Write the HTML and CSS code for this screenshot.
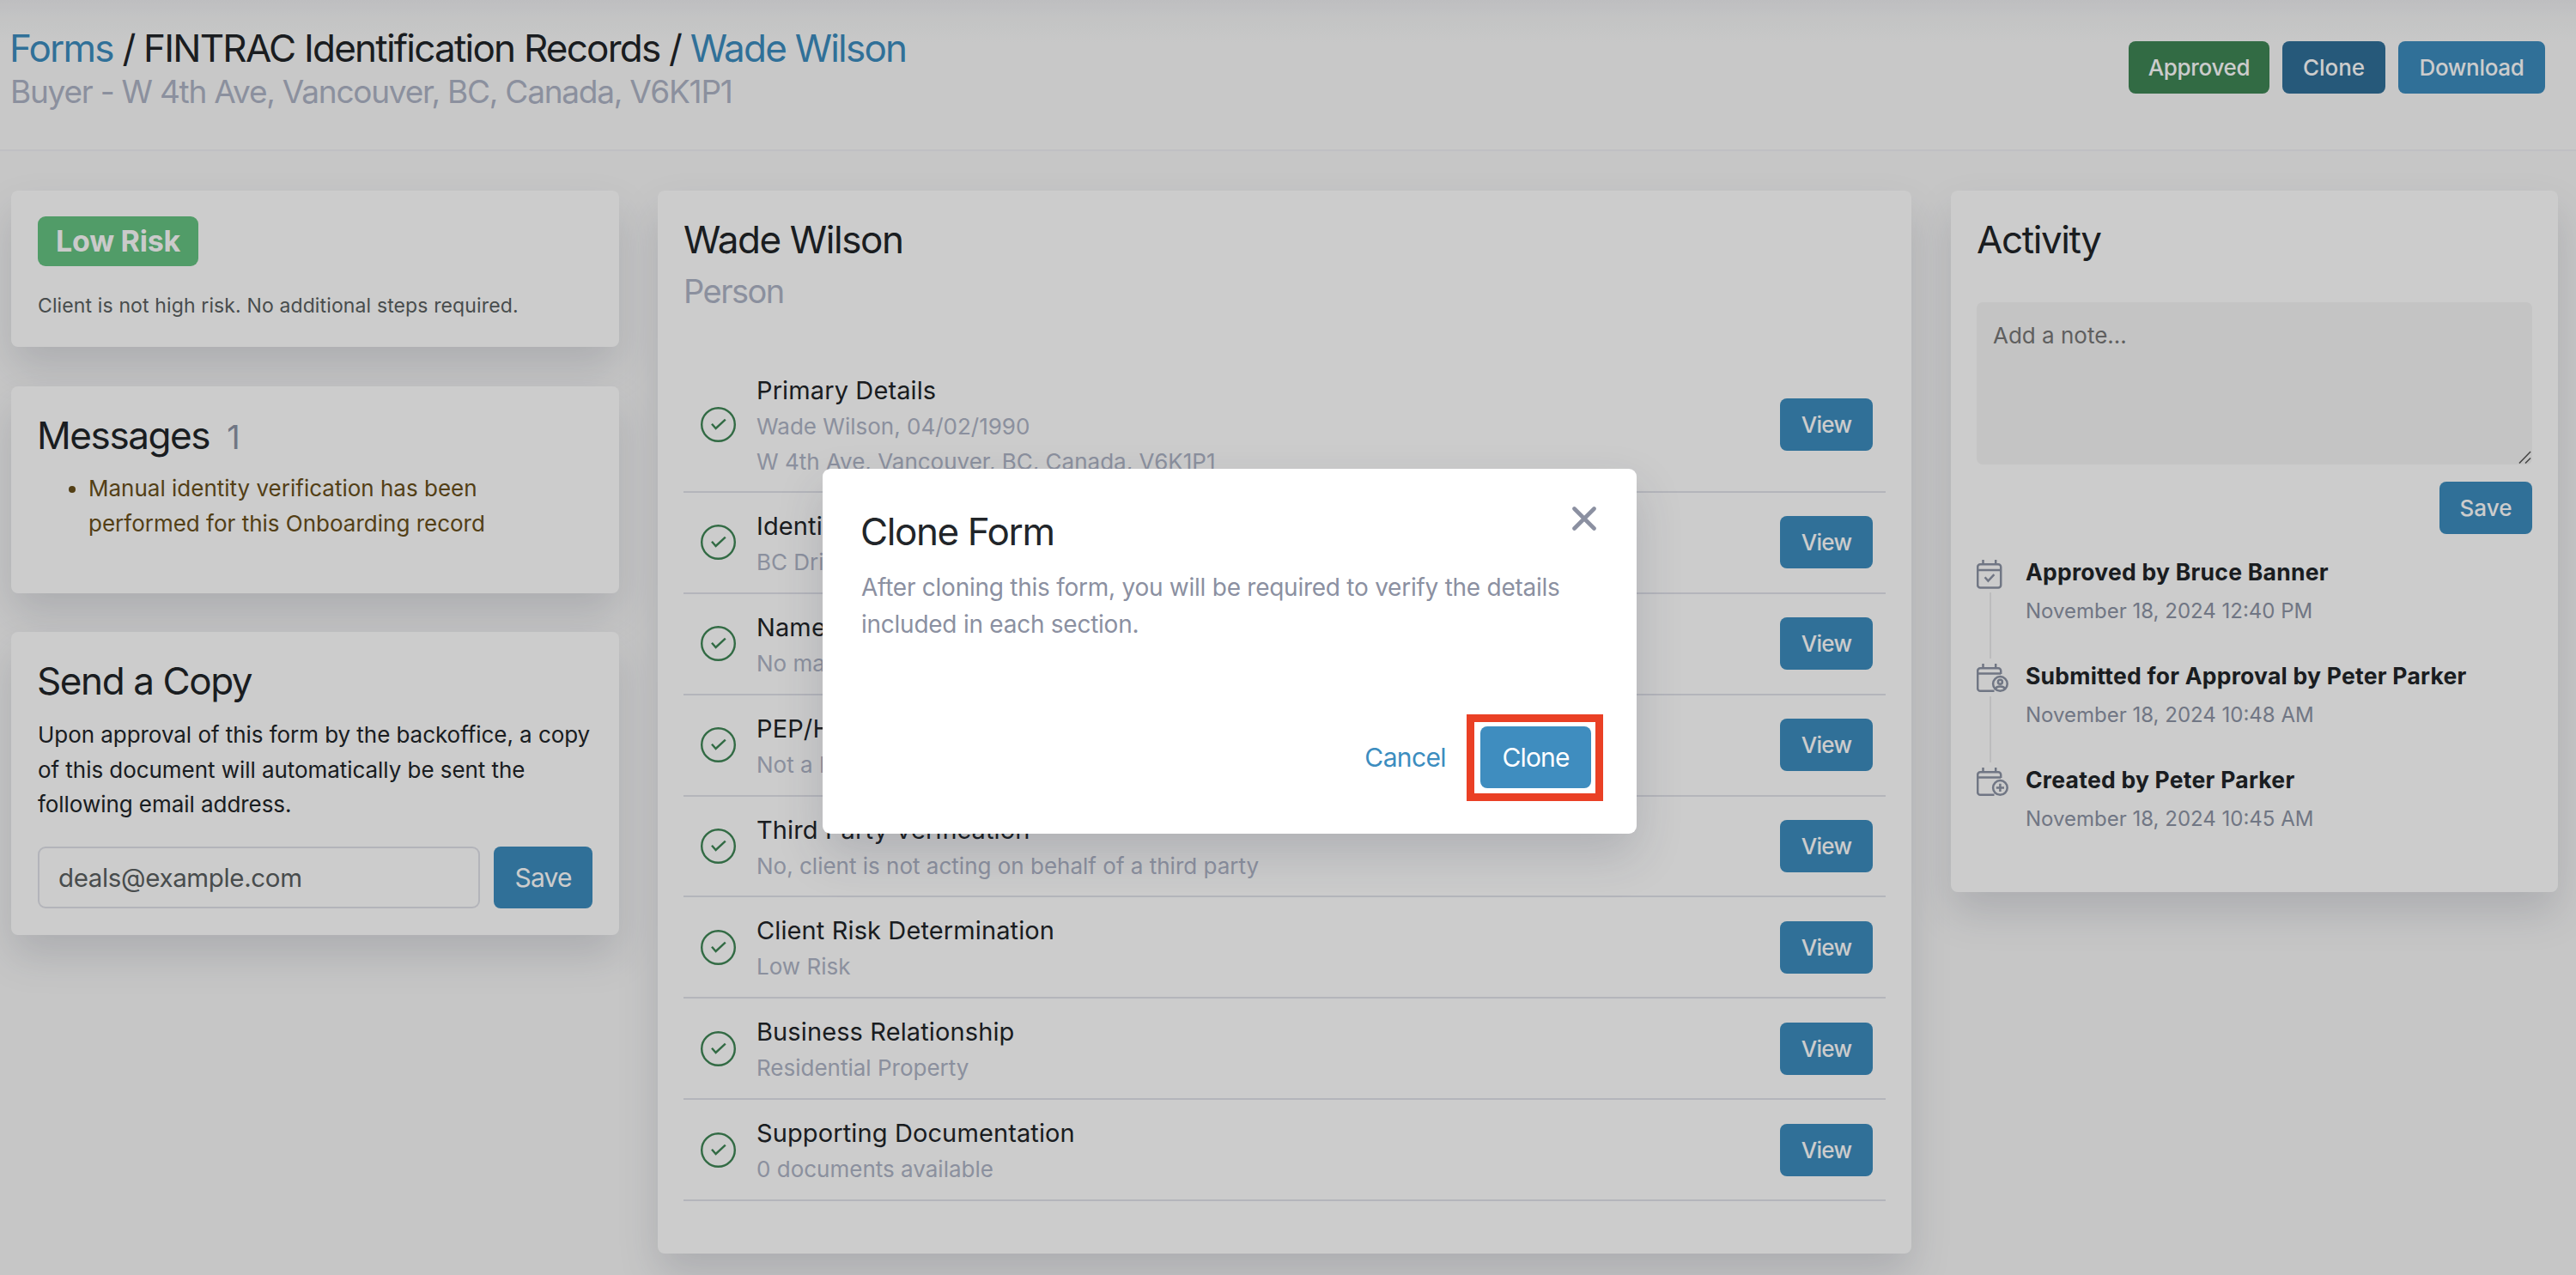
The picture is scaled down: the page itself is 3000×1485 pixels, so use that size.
FILE: index.html
```html
<!DOCTYPE html>
<html lang="en">
<head>
<meta charset="utf-8">
<title>FINTRAC Identification Records</title>
<link rel="stylesheet" href="styles.css">
</head>
<body>
<svg class="sprite" aria-hidden="true">
  <symbol id="check-circle" viewBox="0 0 41 41">
    <circle cx="20.5" cy="20.5" r="19.3"/>
    <path d="M13 19.800l4.600 5.200 11.200-10.400"/>
  </symbol>
  <symbol id="cal-check" viewBox="0 0 38 34">
    <rect x="1.2" y="5.2" width="27" height="27.4" rx="3"/>
    <path d="M1.2 12h27M7.5 0v5M22.2 0v5M9.6 20.2l3.8 4.4 7-7.4"/>
  </symbol>
  <symbol id="cal-user" viewBox="0 0 38 34">
    <path d="M28.2 12V8.2a3 3 0 0 0-3-3h-21a3 3 0 0 0-3 3v20.6a3 3 0 0 0 3 3H20.5M1.2 11.5h27M7.5 0v5M22.2 0v5"/>
    <circle cx="27.4" cy="23.4" r="8.3"/>
    <circle cx="27.4" cy="21.3" r="2.5"/>
    <path d="M22 29q1.2-2.6 5.4-2.6t5.4 2.6"/>
  </symbol>
  <symbol id="cal-plus" viewBox="0 0 38 34">
    <path d="M28.2 12V8.2a3 3 0 0 0-3-3h-21a3 3 0 0 0-3 3v20.6a3 3 0 0 0 3 3H20.5M1.2 11.5h27M7.5 0v5M22.2 0v5"/>
    <circle cx="27.4" cy="23.4" r="8.3"/>
    <path d="M27.4 18.8v9.2M22.8 23.4h9.2"/>
  </symbol>
</svg>

<header class="header">
  <div>
    <h1 class="crumbs"><a href="#">Forms</a> / FINTRAC Identification Records / <a href="#">Wade Wilson</a></h1>
    <p class="address">Buyer - W 4th Ave, Vancouver, BC, Canada, V6K1P1</p>
  </div>
  <div class="header-actions">
    <button class="btn btn-approved">Approved</button>
    <button class="btn btn-clone">Clone</button>
    <button class="btn btn-download">Download</button>
  </div>
</header>

<main class="columns">
  <div class="side">
    <section class="card risk">
      <span class="badge">Low Risk</span>
      <p class="risk-note">Client is not high risk. No additional steps required.</p>
    </section>
    <section class="card messages">
      <h2>Messages<span class="count">1</span></h2>
      <ul><li>Manual identity verification has been<br>performed for this Onboarding record</li></ul>
    </section>
    <section class="card send">
      <h2>Send a Copy</h2>
      <p class="send-text">Upon approval of this form by the backoffice, a copy<br>of this document will automatically be sent the<br>following email address.</p>
      <div class="email-row">
        <div class="email">deals@example.com</div>
        <button class="btn btn-large btn-email">Save</button>
      </div>
    </section>
  </div>

  <section class="card record">
    <h2>Wade Wilson</h2>
    <p class="kind">Person</p>
    <ul class="rows">
      <li class="row row-first"><svg class="check"><use href="#check-circle"/></svg><div class="row-text"><h3>Primary Details</h3><p>Wade Wilson, 04/02/1990<br>W 4th Ave, Vancouver, BC, Canada, V6K1P1</p></div><button class="btn btn-view">View</button></li>
      <li class="row"><svg class="check"><use href="#check-circle"/></svg><div class="row-text"><h3>Identi</h3><p>BC Dri</p></div><button class="btn btn-view">View</button></li>
      <li class="row"><svg class="check"><use href="#check-circle"/></svg><div class="row-text"><h3>Name</h3><p>No ma</p></div><button class="btn btn-view">View</button></li>
      <li class="row"><svg class="check"><use href="#check-circle"/></svg><div class="row-text"><h3>PEP/H</h3><p>Not a P</p></div><button class="btn btn-view">View</button></li>
      <li class="row"><svg class="check"><use href="#check-circle"/></svg><div class="row-text"><h3>Third Party Verification</h3><p>No, client is not acting on behalf of a third party</p></div><button class="btn btn-view">View</button></li>
      <li class="row"><svg class="check"><use href="#check-circle"/></svg><div class="row-text"><h3>Client Risk Determination</h3><p>Low Risk</p></div><button class="btn btn-view">View</button></li>
      <li class="row"><svg class="check"><use href="#check-circle"/></svg><div class="row-text"><h3>Business Relationship</h3><p>Residential Property</p></div><button class="btn btn-view">View</button></li>
      <li class="row"><svg class="check"><use href="#check-circle"/></svg><div class="row-text"><h3>Supporting Documentation</h3><p>0 documents available</p></div><button class="btn btn-view">View</button></li>
    </ul>
  </section>

  <section class="card activity">
    <h2>Activity</h2>
    <div class="note">Add a note...<svg class="grip" viewBox="0 0 16 16"><path d="M1 15.5L15 1M8.5 15.5L15 9"/></svg></div>
    <button class="btn btn-note">Save</button>
    <ol class="timeline">
      <li><div class="rail"><svg><use href="#cal-check"/></svg><i></i></div><div><h4>Approved by Bruce Banner</h4><time>November 18, 2024 12:40 PM</time></div></li>
      <li><div class="rail"><svg><use href="#cal-user"/></svg><i></i></div><div><h4>Submitted for Approval by Peter Parker</h4><time>November 18, 2024 10:48 AM</time></div></li>
      <li><div class="rail"><svg><use href="#cal-plus"/></svg></div><div><h4>Created by Peter Parker</h4><time>November 18, 2024 10:45 AM</time></div></li>
    </ol>
  </section>
</main>

<div class="overlay">
  <div class="modal" role="dialog">
    <svg class="close" viewBox="0 0 28 28"><path d="M2.5 2.5l23 23M25.5 2.5l-23 23"/></svg>
    <h2>Clone Form</h2>
    <p class="modal-text">After cloning this form, you will be required to verify the details<br>included in each section.</p>
    <div class="modal-actions">
      <a class="cancel" href="#">Cancel</a>
      <div class="confirm"><button class="btn btn-large btn-confirm">Clone</button></div>
    </div>
  </div>
</div>
</body>
</html>
```
FILE: styles.css
```css
* { box-sizing: border-box; margin: 0; padding: 0; }

body {
  position: relative;
  width: 3000px;
  height: 1485px;
  overflow: hidden;
  background: #f8f8f8;
  color: #212529;
  font-family: Inter, "Liberation Sans", sans-serif;
  font-size: 26px;
}

ul, ol { list-style: none; }
a { color: #3c8dbf; text-decoration: none; }
.sprite { display: none; }
svg { fill: none; }

h1, h2 {
  font-size: 44px;
  line-height: 53px;
  font-weight: 400;
  letter-spacing: -0.032em;
}

.header {
  display: flex;
  justify-content: space-between;
  height: 176px;
  padding: 30px 36px 0 11px;
  border-bottom: 2px solid #f0f0f4;
  background: linear-gradient(#eeeef1, #f5f6f6 22px, #fbfbfb 56px);
}
.crumbs { font-weight: 400; letter-spacing: -0.0402em; line-height: 52px; }
.address {
  margin-top: 3px;
  padding-left: 1px;
  font-size: 37px;
  line-height: 44px;
  letter-spacing: -0.0335em;
  color: #aeb4c6;
}
.header-actions { display: flex; gap: 15px; padding-top: 18px; }

.btn {
  height: 61px;
  border: 0;
  border-radius: 8px;
  background: #3c8dbf;
  color: #fff;
  font: 450 26px/61px Inter, "Liberation Sans", sans-serif;
  text-align: center;
}
.btn-approved { width: 164px; background: #3f8656; letter-spacing: -0.012em; }
.btn-clone { width: 120px; background: #307099; }
.btn-download { width: 171px; line-height: 59px; letter-spacing: -0.012em; }
.btn-view { width: 108px; letter-spacing: -0.026em; }
.btn-large { height: 72px; font-size: 30px; font-weight: 400; line-height: 72px; letter-spacing: -0.028em; }
.btn-email { width: 115px; }

.columns {
  display: grid;
  grid-template-columns: 708px 1461px 707px;
  column-gap: 45px;
  align-items: start;
  padding: 46px 0 0 13px;
}
.side { display: grid; gap: 45.5px; }

.card {
  padding: 31px;
  border-radius: 8px;
  background: #fff;
  box-shadow: 0 24px 48px rgba(40, 46, 72, 0.15);
}

.risk { height: 182px; padding-top: 30px; }
.badge {
  display: block;
  width: 187px;
  height: 58px;
  border-radius: 9px;
  background: #66c382;
  color: #fdfdfd;
  font-size: 34px;
  font-weight: 700;
  line-height: 57px;
  letter-spacing: -0.007em;
  text-align: center;
}
.risk-note { margin-top: 28px; font-size: 23px; line-height: 36px; letter-spacing: 0.0055em; color: #5a6061; }

.messages { height: 241px; padding-left: 30px; }
.count { margin-left: 20px; font-size: 38px; font-weight: 400; color: #8d94a5; }
.messages ul { margin-top: 12px; padding-left: 60px; list-style: disc; line-height: 41px; color: #684f1b; }

.send { height: 353px; }
.send h2 { margin-left: -1px; }
.send-text { margin-top: 16px; line-height: 40.5px; letter-spacing: -0.002em; }
.email-row { display: flex; justify-content: space-between; margin-top: 28px; }
.email {
  width: 515px;
  height: 72px;
  padding-left: 22px;
  border: 2px solid #e0e2e9;
  border-radius: 9px;
  font-size: 29.5px;
  line-height: 69px;
  letter-spacing: -0.012em;
  color: #5a6061;
}

.record { width: 1460px; height: 1238px; padding: 31px 30px 0 30px; }
.kind { margin-top: 10px; font-size: 38px; line-height: 46px; letter-spacing: -0.04em; color: #aeb4c6; }
.rows { margin-top: 54px; }
.row {
  display: flex;
  align-items: center;
  height: 117.86px;
  padding: 0 15px 0 20px;
  border-bottom: 2px solid #e1e3ea;
}
.row-first { height: 158px; }
.check { width: 41px; height: 41px; stroke: #3f8656; stroke-width: 2.4; }
.row-text { flex: 1; padding: 2px 0 0 24px; }
.row h3 { font-size: 29px; line-height: 43px; font-weight: 400; letter-spacing: 0.004em; }
.row p { line-height: 41px; color: #aeb4c6; }

.activity { height: 817px; padding: 31px 30px; }
.note {
  position: relative;
  height: 189px;
  margin-top: 46px;
  padding: 18px 19px;
  border-radius: 7px;
  background: #f5f5f5;
  color: #777;
  line-height: 41px;
}
.grip { position: absolute; right: 1px; bottom: 1px; width: 15px; height: 15px; stroke: #555; stroke-width: 1.6; }
.btn-note { display: block; width: 108px; margin: 20px 0 0 auto; }
.timeline { margin-top: 24px; }
.timeline li { display: flex; height: 121px; }
.rail { display: flex; flex-direction: column; width: 57px; padding-top: 6px; }
.rail svg { width: 38px; height: 34px; stroke: #8d94a5; stroke-width: 2.5; }
.rail i { flex: 1; width: 2px; margin: 4px 0 0 15px; background: #ebebed; }
.timeline h4 { font-size: 26.5px; line-height: 40px; font-weight: 700; letter-spacing: 0.0095em; }
.timeline time { display: block; margin-top: 6px; font-size: 24px; line-height: 40px; color: #8d94a5; }

.overlay { position: absolute; inset: 0; background: rgba(0, 0, 0, 0.2); }
.modal {
  position: absolute;
  left: 958px;
  top: 546px;
  width: 948px;
  height: 425px;
  padding: 47px 46px 46px 44px;
  display: flex;
  flex-direction: column;
  border-radius: 9px;
  background: #fff;
  box-shadow: 0 24px 54px rgba(40, 46, 72, 0.17);
}
.close { position: absolute; right: 47px; top: 44px; width: 28px; height: 28px; stroke: #8b90a1; stroke-width: 4.6; stroke-linecap: round; }
.modal-text { margin-top: 17px; padding-left: 1px; font-size: 28px; line-height: 43px; letter-spacing: -0.009em; color: #8b90a1; }
.modal-actions { display: flex; justify-content: flex-end; align-items: center; gap: 40px; margin: auto 7px 7px 0; }
.cancel { font-size: 30px; letter-spacing: -0.0208em; }
.confirm { position: relative; }
.confirm::after { content: ""; position: absolute; inset: -14px -14px -15px -16px; border: 9px solid #ea4025; }
.btn-confirm { display: block; width: 129px; background: #3f8dbf; }
```
